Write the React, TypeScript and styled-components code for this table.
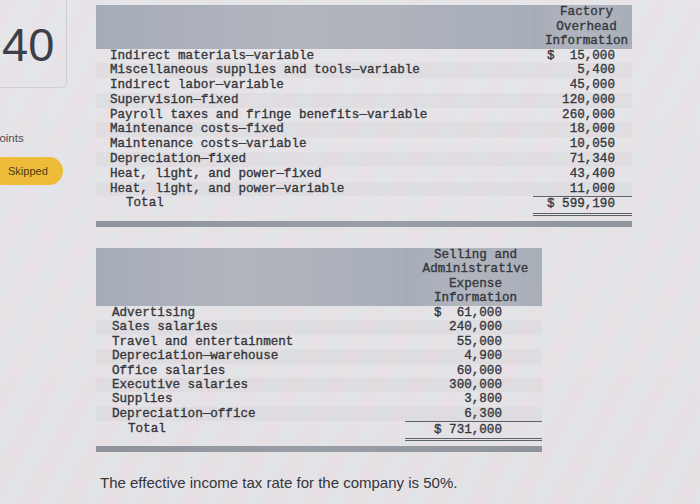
import React from "react";
import styled, { createGlobalStyle } from "styled-components";

const GlobalStyle = createGlobalStyle`
  html, body {
    margin: 0;
    padding: 0;
  }
  body {
    background: #e5e4e8;
  }
`;

const Page = styled.div`
  display: flex;
  width: 700px;
  height: 504px;
  overflow: hidden;
  background:
    repeating-linear-gradient(
      118deg,
      rgba(255, 205, 215, 0.09) 0px,
      rgba(255, 205, 215, 0.09) 18px,
      rgba(205, 235, 228, 0.09) 18px,
      rgba(205, 235, 228, 0.09) 36px
    ),
    linear-gradient(180deg, #e6e5e9 0%, #e4e2e6 100%);
`;

const Sidebar = styled.aside`
  width: 96px;
  flex-shrink: 0;
  overflow: hidden;
  display: flex;
  flex-direction: column;
  font-family: "Liberation Sans", Arial, sans-serif;
`;

const QuestionCard = styled.div`
  width: 64px;
  height: 86px;
  border-right: 1px solid #cfcfd4;
  border-bottom: 1px solid #cfcfd4;
  border-bottom-right-radius: 6px;
  display: flex;
  align-items: center;
  padding-left: 2px;
  padding-top: 1px;
  box-sizing: content-box;
  font-size: 47px;
  color: #3b3f4a;
`;

const PointsLabel = styled.div`
  margin-top: 43px;
  margin-left: -7px;
  font-size: 11.5px;
  line-height: 14px;
  color: #4a4d55;
`;

const SkippedPill = styled.div`
  margin-top: 12px;
  margin-left: -10px;
  width: 73px;
  height: 28px;
  border-radius: 14px;
  background: #efbc3a;
  display: flex;
  align-items: center;
  padding-left: 18px;
  box-sizing: border-box;
  font-size: 11px;
  color: #4b3b12;
`;

const Main = styled.main`
  flex: 1;
  display: flex;
  flex-direction: column;
  padding-top: 5px;
`;

const Table = styled.div<{ $cols: string; $gap?: number }>`
  display: grid;
  grid-template-columns: ${(p) => p.$cols};
  margin-top: ${(p) => p.$gap ?? 0}px;
  font-family: "Liberation Mono", "Courier New", monospace;
  font-size: 12.6px;
  color: #34373c;
  -webkit-text-stroke: 0.35px #34373c;
  width: max-content;
`;

const HeaderCell = styled.div<{ $lh: number; $shift?: number }>`
  background: linear-gradient(90deg, #a6acb7 0%, #b1b5be 45%, #a8aeb8 100%);
  text-align: center;
  line-height: ${(p) => p.$lh}px;
  padding-left: ${(p) => p.$shift ?? 0}px;
  white-space: pre;
`;

const LabelCell = styled.div<{ $h: number; $pad: number; $stripe?: boolean }>`
  height: ${(p) => p.$h}px;
  line-height: ${(p) => p.$h}px;
  padding-left: ${(p) => p.$pad}px;
  white-space: pre;
  background: ${(p) => (p.$stripe ? "rgba(90, 90, 100, 0.045)" : "transparent")};
`;

const ValueCell = styled.div<{
  $h: number;
  $pad: number;
  $stripe?: boolean;
  $total?: boolean;
}>`
  height: ${(p) => p.$h}px;
  line-height: ${(p) => p.$h}px;
  padding-right: ${(p) => p.$pad}px;
  text-align: right;
  white-space: pre;
  background: ${(p) => (p.$stripe ? "rgba(90, 90, 100, 0.045)" : "transparent")};
  border-top: ${(p) => (p.$total ? "1px solid #5d6168" : "none")};
  border-bottom: ${(p) => (p.$total ? "3px double #5d6168" : "none")};
`;

const BottomBar = styled.div`
  grid-column: 1 / -1;
  height: 6px;
  margin-top: 5px;
  background: linear-gradient(90deg, #8e939c 0%, #9a9ea6 50%, #8f949d 100%);
`;

const Note = styled.p`
  margin: 22px 0 0 4px;
  font-family: "Liberation Sans", Arial, sans-serif;
  font-size: 15px;
  line-height: 17px;
  color: #34363b;
`;

type Row = [string, string];

const factoryRows: Row[] = [
  ["Indirect materials\u2014variable", "$  15,000"],
  ["Miscellaneous supplies and tools\u2014variable", "5,400"],
  ["Indirect labor\u2014variable", "45,000"],
  ["Supervision\u2014fixed", "120,000"],
  ["Payroll taxes and fringe benefits\u2014variable", "260,000"],
  ["Maintenance costs\u2014fixed", "18,000"],
  ["Maintenance costs\u2014variable", "10,050"],
  ["Depreciation\u2014fixed", "71,340"],
  ["Heat, light, and power\u2014fixed", "43,400"],
  ["Heat, light, and power\u2014variable", "11,000"],
];

const sellingRows: Row[] = [
  ["Advertising", "$  61,000"],
  ["Sales salaries", "240,000"],
  ["Travel and entertainment", "55,000"],
  ["Depreciation\u2014warehouse", "4,900"],
  ["Office salaries", "60,000"],
  ["Executive salaries", "300,000"],
  ["Supplies", "3,800"],
  ["Depreciation\u2014office", "6,300"],
];

type TableProps = {
  cols: string;
  gap?: number;
  header: string;
  headerLh: number;
  headerShift: number;
  rows: Row[];
  total: string;
  rowH: number;
  totalH: number;
  labelPad: number;
  totalPad: number;
  valuePad: number;
};

const DataTable: React.FC<TableProps> = ({
  cols,
  gap,
  header,
  headerLh,
  headerShift,
  rows,
  total,
  rowH,
  totalH,
  labelPad,
  totalPad,
  valuePad,
}) => (
  <Table $cols={cols} $gap={gap}>
    <HeaderCell $lh={headerLh} />
    <HeaderCell $lh={headerLh} $shift={headerShift}>
      {header}
    </HeaderCell>
    {rows.map(([label, value], i) => (
      <React.Fragment key={label}>
        <LabelCell $h={rowH} $pad={labelPad} $stripe={i % 2 === 1}>
          {label}
        </LabelCell>
        <ValueCell $h={rowH} $pad={valuePad} $stripe={i % 2 === 1}>
          {value}
        </ValueCell>
      </React.Fragment>
    ))}
    <LabelCell $h={totalH} $pad={totalPad}>
      Total
    </LabelCell>
    <ValueCell $h={totalH} $pad={valuePad} $total>
      {total}
    </ValueCell>
    <BottomBar />
  </Table>
);

export default function App() {
  return (
    <>
      <GlobalStyle />
      <Page>
        <Sidebar>
          <QuestionCard>40</QuestionCard>
          <PointsLabel>points</PointsLabel>
          <SkippedPill>Skipped</SkippedPill>
        </Sidebar>
        <Main>
          <DataTable
            cols="437px 99px"
            header={"Factory\nOverhead\nInformation"}
            headerLh={14.5}
            headerShift={8}
            rows={factoryRows}
            total="$ 599,190"
            rowH={14.8}
            totalH={15.5}
            labelPad={14}
            totalPad={30}
            valuePad={17}
          />
          <DataTable
            cols="309px 137px"
            gap={21}
            header={"Selling and\nAdministrative\nExpense\nInformation"}
            headerLh={14.5}
            headerShift={4}
            rows={sellingRows}
            total="$ 731,000"
            rowH={14.4}
            totalH={16}
            labelPad={16}
            totalPad={32}
            valuePad={40}
          />
          <Note>The effective income tax rate for the company is 50%.</Note>
        </Main>
      </Page>
    </>
  );
}
